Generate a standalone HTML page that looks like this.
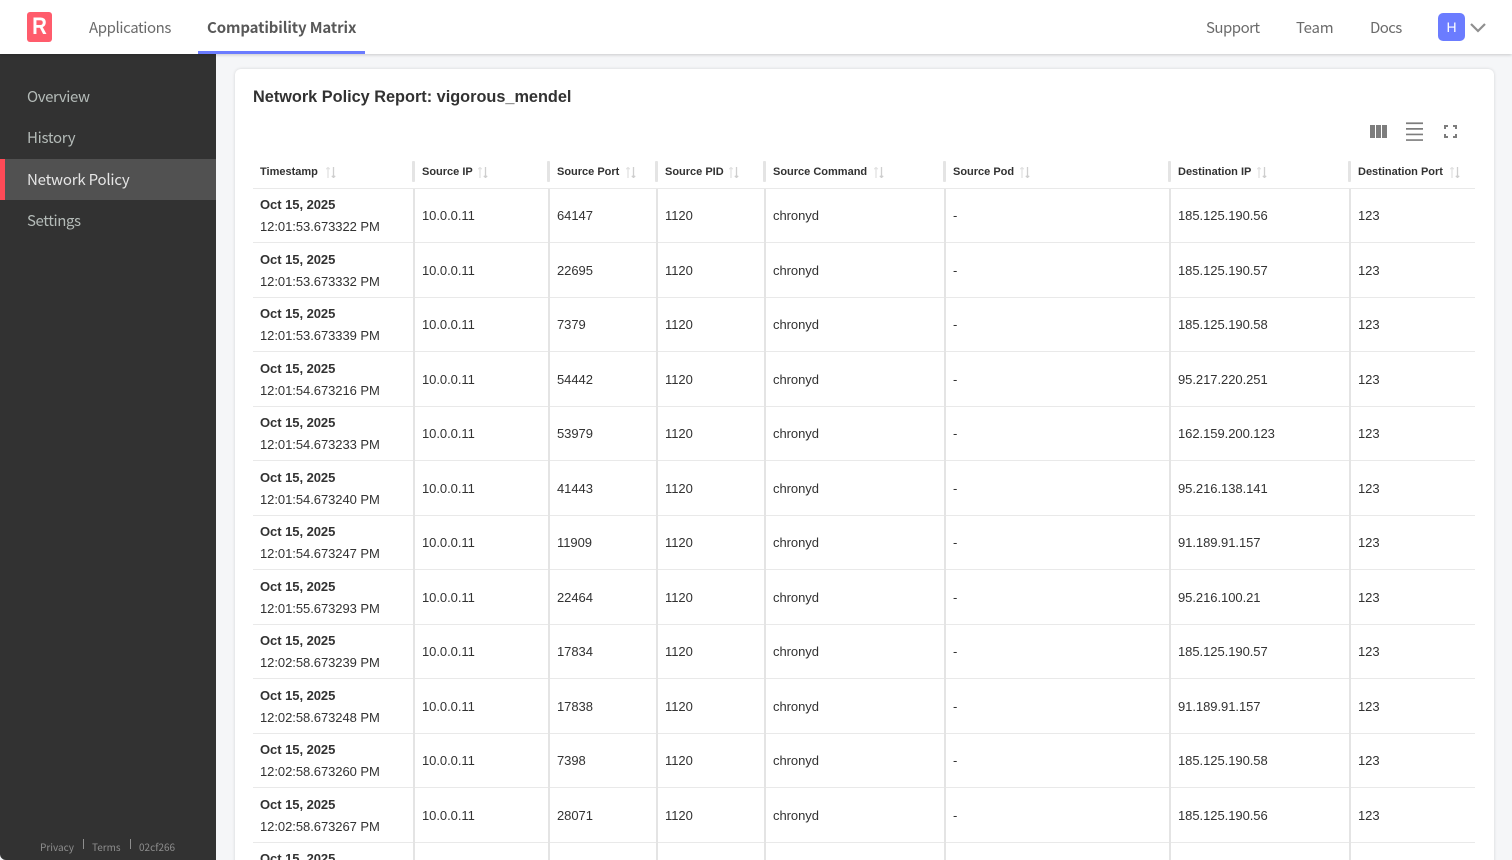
<!DOCTYPE html>
<html><head><meta charset="utf-8"><title>Network Policy</title>
<style>
*{box-sizing:border-box}
html,body{margin:0;padding:0;width:1512px;height:860px;overflow:hidden;background:#f5f6f8;font-family:"Liberation Sans",sans-serif;color:#323232}
#w{position:relative;width:1512px;height:860px;overflow:hidden}
.top{position:absolute;left:0;top:0;width:1512px;height:54px;background:#fff;box-shadow:0 1px 3px rgba(0,0,0,.18);z-index:3}
.nav{position:absolute;top:18px;font:15px/20px "Noto Sans CJK JP","Liberation Sans",sans-serif;color:#6b6b6b;white-space:nowrap}
.logo{position:absolute;left:27px;top:12px;width:25px;height:30px;background:#ff5c6c;border-radius:3px;color:#fff;font:bold 24px/30px "Liberation Sans",sans-serif;text-align:center}
.logo span{display:block;transform:scaleX(.85)}
.act{position:absolute;left:198px;top:51px;width:167px;height:3px;background:#6b7cff}
.av{position:absolute;left:1438px;top:13px;width:27px;height:28px;border-radius:5px;background:#6b7cff;color:#fff;font:14px/28px "Liberation Sans",sans-serif;text-align:center}
.side{position:absolute;left:0;top:54px;width:216px;height:806px;background:#323232;border-bottom-left-radius:6px;z-index:1}
.si{position:absolute;left:27px;font:15px/20px "Noto Sans CJK JP","Liberation Sans",sans-serif;color:#b4bbb8;white-space:nowrap}
.sel{position:absolute;left:0;top:105px;width:216px;height:41px;background:#515151;border-left:5px solid #ff4a57}
.ft{position:absolute;top:786px;font:10px/14px "Noto Sans CJK JP","Liberation Sans",sans-serif;color:#8e8e8e;white-space:nowrap}
.fd{position:absolute;top:785px;width:1px;height:10px;background:#8e8e8e}
.card{position:absolute;left:235px;top:69px;width:1259px;height:820px;background:#fff;border-radius:6px;box-shadow:0 0 3px rgba(0,0,0,.14)}
h1{position:absolute;left:253px;top:87px;margin:0;font:bold 16.3px/21px "Liberation Sans",sans-serif;color:#323232;z-index:2;white-space:nowrap}
.tb{position:absolute;left:253px;top:155px;width:1222px;z-index:2}
.r{display:flex;height:54.5px;border-bottom:1px solid #e9e9e9;font-size:13px;letter-spacing:-.05px;color:#323232;position:relative}
.h{height:33.6px;font-weight:bold;font-size:11px;line-height:34px;border-bottom:1px solid #e9e9e9;position:relative}
.c{position:absolute;top:0;bottom:-1px;display:flex;align-items:center;white-space:nowrap;padding-left:8px}
.b{border-left:2px solid #e4e4e4;padding-left:7px}
.c0{left:-1px}.c1{left:160px}.c2{left:295px}.c3{left:403px}.c4{left:511px}.c5{left:691px}.c6{left:916px}.c7{left:1096px}
.t{flex-direction:column;align-items:flex-start;justify-content:center;line-height:22px;padding-top:.6px}
.t b{font-size:13px;color:#323232}
.hc{position:absolute;top:0;white-space:nowrap;color:#323232}
.hd{position:absolute;top:6px;width:3px;height:21px;background:#e4e4e4;border-radius:1px}
.so{position:absolute;top:12px;width:10px;height:11px}
svg{display:block}
</style></head><body><div id="w">
<div class="top">
<div class="logo"><span>R</span></div>
<div class="nav" style="left:89px;letter-spacing:-.4px">Applications</div>
<div class="nav" style="left:207px;font-weight:bold;color:#585858;letter-spacing:-.12px">Compatibility Matrix</div>
<div class="act"></div>
<div class="nav" style="left:1206px;letter-spacing:-.52px">Support</div>
<div class="nav" style="left:1296px;letter-spacing:-.2px">Team</div>
<div class="nav" style="left:1370px;letter-spacing:-.6px">Docs</div>
<div class="av">H</div>
<svg style="position:absolute;left:1470px;top:22px" width="16" height="11" viewBox="0 0 16 11"><path d="M1 2 L8 9 L15 2" fill="none" stroke="#8f8f8f" stroke-width="2.2"/></svg>
</div>
<div class="side">
<div class="sel"></div>
<div class="si" style="top:33px;letter-spacing:-.4px">Overview</div>
<div class="si" style="top:74px;letter-spacing:-.3px">History</div>
<div class="si" style="top:116px;color:#e6e6e6;letter-spacing:-.2px">Network Policy</div>
<div class="si" style="top:157px;letter-spacing:-.4px">Settings</div>
<div class="ft" style="left:40px">Privacy</div><div class="fd" style="left:83px"></div>
<div class="ft" style="left:92px">Terms</div><div class="fd" style="left:130px"></div>
<div class="ft" style="left:139px">02cf266</div>
</div>
<div class="card"></div>
<h1>Network Policy Report: vigorous_mendel</h1>
<svg style="position:absolute;left:1370px;top:125px;z-index:2" width="17" height="13" viewBox="0 0 17 13"><path fill="#7d7d7d" d="M0 0h5v13H0zM6 0h5v13H6zM12 0h5v13h-5z"/></svg>
<svg style="position:absolute;left:1406px;top:122px;z-index:2" width="17" height="19" viewBox="0 0 17 19"><path fill="#7d7d7d" d="M0 .4h17v1.700H0zM0 6h17v1.700H0zM0 11.600h17v1.700H0zM0 17.200h17v1.700H0z"/></svg>
<svg style="position:absolute;left:1444px;top:125px;z-index:2" width="13" height="13" viewBox="0 0 13 13"><path fill="none" stroke="#7d7d7d" stroke-width="2" d="M1 4V1h3M9 1h3v3M12 9v3H9M4 12H1V9"/></svg>
<div class="tb">
<div class="h">
<span class="hc" style="left:7px">Timestamp</span><svg class="so" style="left:73px" viewBox="0 0 10 11"><path d="M2 11V.5M.3 2.200 2 .5l1.700 1.700" fill="none" stroke="#e2e2e2" stroke-width="1.300"/><path d="M7.500 0v10.500M5.800 8.800l1.700 1.700 1.700-1.700" fill="none" stroke="#cfcfcf" stroke-width="1.300"/></svg>
<i class="hd" style="left:159px"></i><span class="hc" style="left:169px">Source IP</span><svg class="so" style="left:225px" viewBox="0 0 10 11"><path d="M2 11V.5M.3 2.200 2 .5l1.700 1.700" fill="none" stroke="#e2e2e2" stroke-width="1.300"/><path d="M7.500 0v10.500M5.800 8.800l1.700 1.700 1.700-1.700" fill="none" stroke="#cfcfcf" stroke-width="1.300"/></svg>
<i class="hd" style="left:294px"></i><span class="hc" style="left:304px">Source Port</span><svg class="so" style="left:373px" viewBox="0 0 10 11"><path d="M2 11V.5M.3 2.200 2 .5l1.700 1.700" fill="none" stroke="#e2e2e2" stroke-width="1.300"/><path d="M7.500 0v10.500M5.800 8.800l1.700 1.700 1.700-1.700" fill="none" stroke="#cfcfcf" stroke-width="1.300"/></svg>
<i class="hd" style="left:402px"></i><span class="hc" style="left:412px">Source PID</span><svg class="so" style="left:476px" viewBox="0 0 10 11"><path d="M2 11V.5M.3 2.200 2 .5l1.700 1.700" fill="none" stroke="#e2e2e2" stroke-width="1.300"/><path d="M7.500 0v10.500M5.800 8.800l1.700 1.700 1.700-1.700" fill="none" stroke="#cfcfcf" stroke-width="1.300"/></svg>
<i class="hd" style="left:510px"></i><span class="hc" style="left:520px">Source Command</span><svg class="so" style="left:621px" viewBox="0 0 10 11"><path d="M2 11V.5M.3 2.200 2 .5l1.700 1.700" fill="none" stroke="#e2e2e2" stroke-width="1.300"/><path d="M7.500 0v10.500M5.800 8.800l1.700 1.700 1.700-1.700" fill="none" stroke="#cfcfcf" stroke-width="1.300"/></svg>
<i class="hd" style="left:690px"></i><span class="hc" style="left:700px">Source Pod</span><svg class="so" style="left:767px" viewBox="0 0 10 11"><path d="M2 11V.5M.3 2.200 2 .5l1.700 1.700" fill="none" stroke="#e2e2e2" stroke-width="1.300"/><path d="M7.500 0v10.500M5.800 8.800l1.700 1.700 1.700-1.700" fill="none" stroke="#cfcfcf" stroke-width="1.300"/></svg>
<i class="hd" style="left:915px"></i><span class="hc" style="left:925px">Destination IP</span><svg class="so" style="left:1004px" viewBox="0 0 10 11"><path d="M2 11V.5M.3 2.200 2 .5l1.700 1.700" fill="none" stroke="#e2e2e2" stroke-width="1.300"/><path d="M7.500 0v10.500M5.800 8.800l1.700 1.700 1.700-1.700" fill="none" stroke="#cfcfcf" stroke-width="1.300"/></svg>
<i class="hd" style="left:1095px"></i><span class="hc" style="left:1105px">Destination Port</span><svg class="so" style="left:1197px" viewBox="0 0 10 11"><path d="M2 11V.5M.3 2.200 2 .5l1.700 1.700" fill="none" stroke="#e2e2e2" stroke-width="1.300"/><path d="M7.500 0v10.500M5.800 8.800l1.700 1.700 1.700-1.700" fill="none" stroke="#cfcfcf" stroke-width="1.300"/></svg>
</div>
<div class="r"><div class="c c0 t"><b>Oct 15, 2025</b><span>12:01:53.673322 PM</span></div><div class="c c1 b">10.0.0.11</div><div class="c c2 b">64147</div><div class="c c3 b">1120</div><div class="c c4 b">chronyd</div><div class="c c5 b">-</div><div class="c c6 b">185.125.190.56</div><div class="c c7 b">123</div></div>
<div class="r"><div class="c c0 t"><b>Oct 15, 2025</b><span>12:01:53.673332 PM</span></div><div class="c c1 b">10.0.0.11</div><div class="c c2 b">22695</div><div class="c c3 b">1120</div><div class="c c4 b">chronyd</div><div class="c c5 b">-</div><div class="c c6 b">185.125.190.57</div><div class="c c7 b">123</div></div>
<div class="r"><div class="c c0 t"><b>Oct 15, 2025</b><span>12:01:53.673339 PM</span></div><div class="c c1 b">10.0.0.11</div><div class="c c2 b">7379</div><div class="c c3 b">1120</div><div class="c c4 b">chronyd</div><div class="c c5 b">-</div><div class="c c6 b">185.125.190.58</div><div class="c c7 b">123</div></div>
<div class="r"><div class="c c0 t"><b>Oct 15, 2025</b><span>12:01:54.673216 PM</span></div><div class="c c1 b">10.0.0.11</div><div class="c c2 b">54442</div><div class="c c3 b">1120</div><div class="c c4 b">chronyd</div><div class="c c5 b">-</div><div class="c c6 b">95.217.220.251</div><div class="c c7 b">123</div></div>
<div class="r"><div class="c c0 t"><b>Oct 15, 2025</b><span>12:01:54.673233 PM</span></div><div class="c c1 b">10.0.0.11</div><div class="c c2 b">53979</div><div class="c c3 b">1120</div><div class="c c4 b">chronyd</div><div class="c c5 b">-</div><div class="c c6 b">162.159.200.123</div><div class="c c7 b">123</div></div>
<div class="r"><div class="c c0 t"><b>Oct 15, 2025</b><span>12:01:54.673240 PM</span></div><div class="c c1 b">10.0.0.11</div><div class="c c2 b">41443</div><div class="c c3 b">1120</div><div class="c c4 b">chronyd</div><div class="c c5 b">-</div><div class="c c6 b">95.216.138.141</div><div class="c c7 b">123</div></div>
<div class="r"><div class="c c0 t"><b>Oct 15, 2025</b><span>12:01:54.673247 PM</span></div><div class="c c1 b">10.0.0.11</div><div class="c c2 b">11909</div><div class="c c3 b">1120</div><div class="c c4 b">chronyd</div><div class="c c5 b">-</div><div class="c c6 b">91.189.91.157</div><div class="c c7 b">123</div></div>
<div class="r"><div class="c c0 t"><b>Oct 15, 2025</b><span>12:01:55.673293 PM</span></div><div class="c c1 b">10.0.0.11</div><div class="c c2 b">22464</div><div class="c c3 b">1120</div><div class="c c4 b">chronyd</div><div class="c c5 b">-</div><div class="c c6 b">95.216.100.21</div><div class="c c7 b">123</div></div>
<div class="r"><div class="c c0 t"><b>Oct 15, 2025</b><span>12:02:58.673239 PM</span></div><div class="c c1 b">10.0.0.11</div><div class="c c2 b">17834</div><div class="c c3 b">1120</div><div class="c c4 b">chronyd</div><div class="c c5 b">-</div><div class="c c6 b">185.125.190.57</div><div class="c c7 b">123</div></div>
<div class="r"><div class="c c0 t"><b>Oct 15, 2025</b><span>12:02:58.673248 PM</span></div><div class="c c1 b">10.0.0.11</div><div class="c c2 b">17838</div><div class="c c3 b">1120</div><div class="c c4 b">chronyd</div><div class="c c5 b">-</div><div class="c c6 b">91.189.91.157</div><div class="c c7 b">123</div></div>
<div class="r"><div class="c c0 t"><b>Oct 15, 2025</b><span>12:02:58.673260 PM</span></div><div class="c c1 b">10.0.0.11</div><div class="c c2 b">7398</div><div class="c c3 b">1120</div><div class="c c4 b">chronyd</div><div class="c c5 b">-</div><div class="c c6 b">185.125.190.58</div><div class="c c7 b">123</div></div>
<div class="r"><div class="c c0 t"><b>Oct 15, 2025</b><span>12:02:58.673267 PM</span></div><div class="c c1 b">10.0.0.11</div><div class="c c2 b">28071</div><div class="c c3 b">1120</div><div class="c c4 b">chronyd</div><div class="c c5 b">-</div><div class="c c6 b">185.125.190.56</div><div class="c c7 b">123</div></div>
<div class="r"><div class="c c0 t"><b>Oct 15, 2025</b><span>12:02:58.673275 PM</span></div><div class="c c1 b"></div><div class="c c2 b"></div><div class="c c3 b"></div><div class="c c4 b"></div><div class="c c5 b"></div><div class="c c6 b"></div><div class="c c7 b"></div></div>
</div>
</div></body></html>
